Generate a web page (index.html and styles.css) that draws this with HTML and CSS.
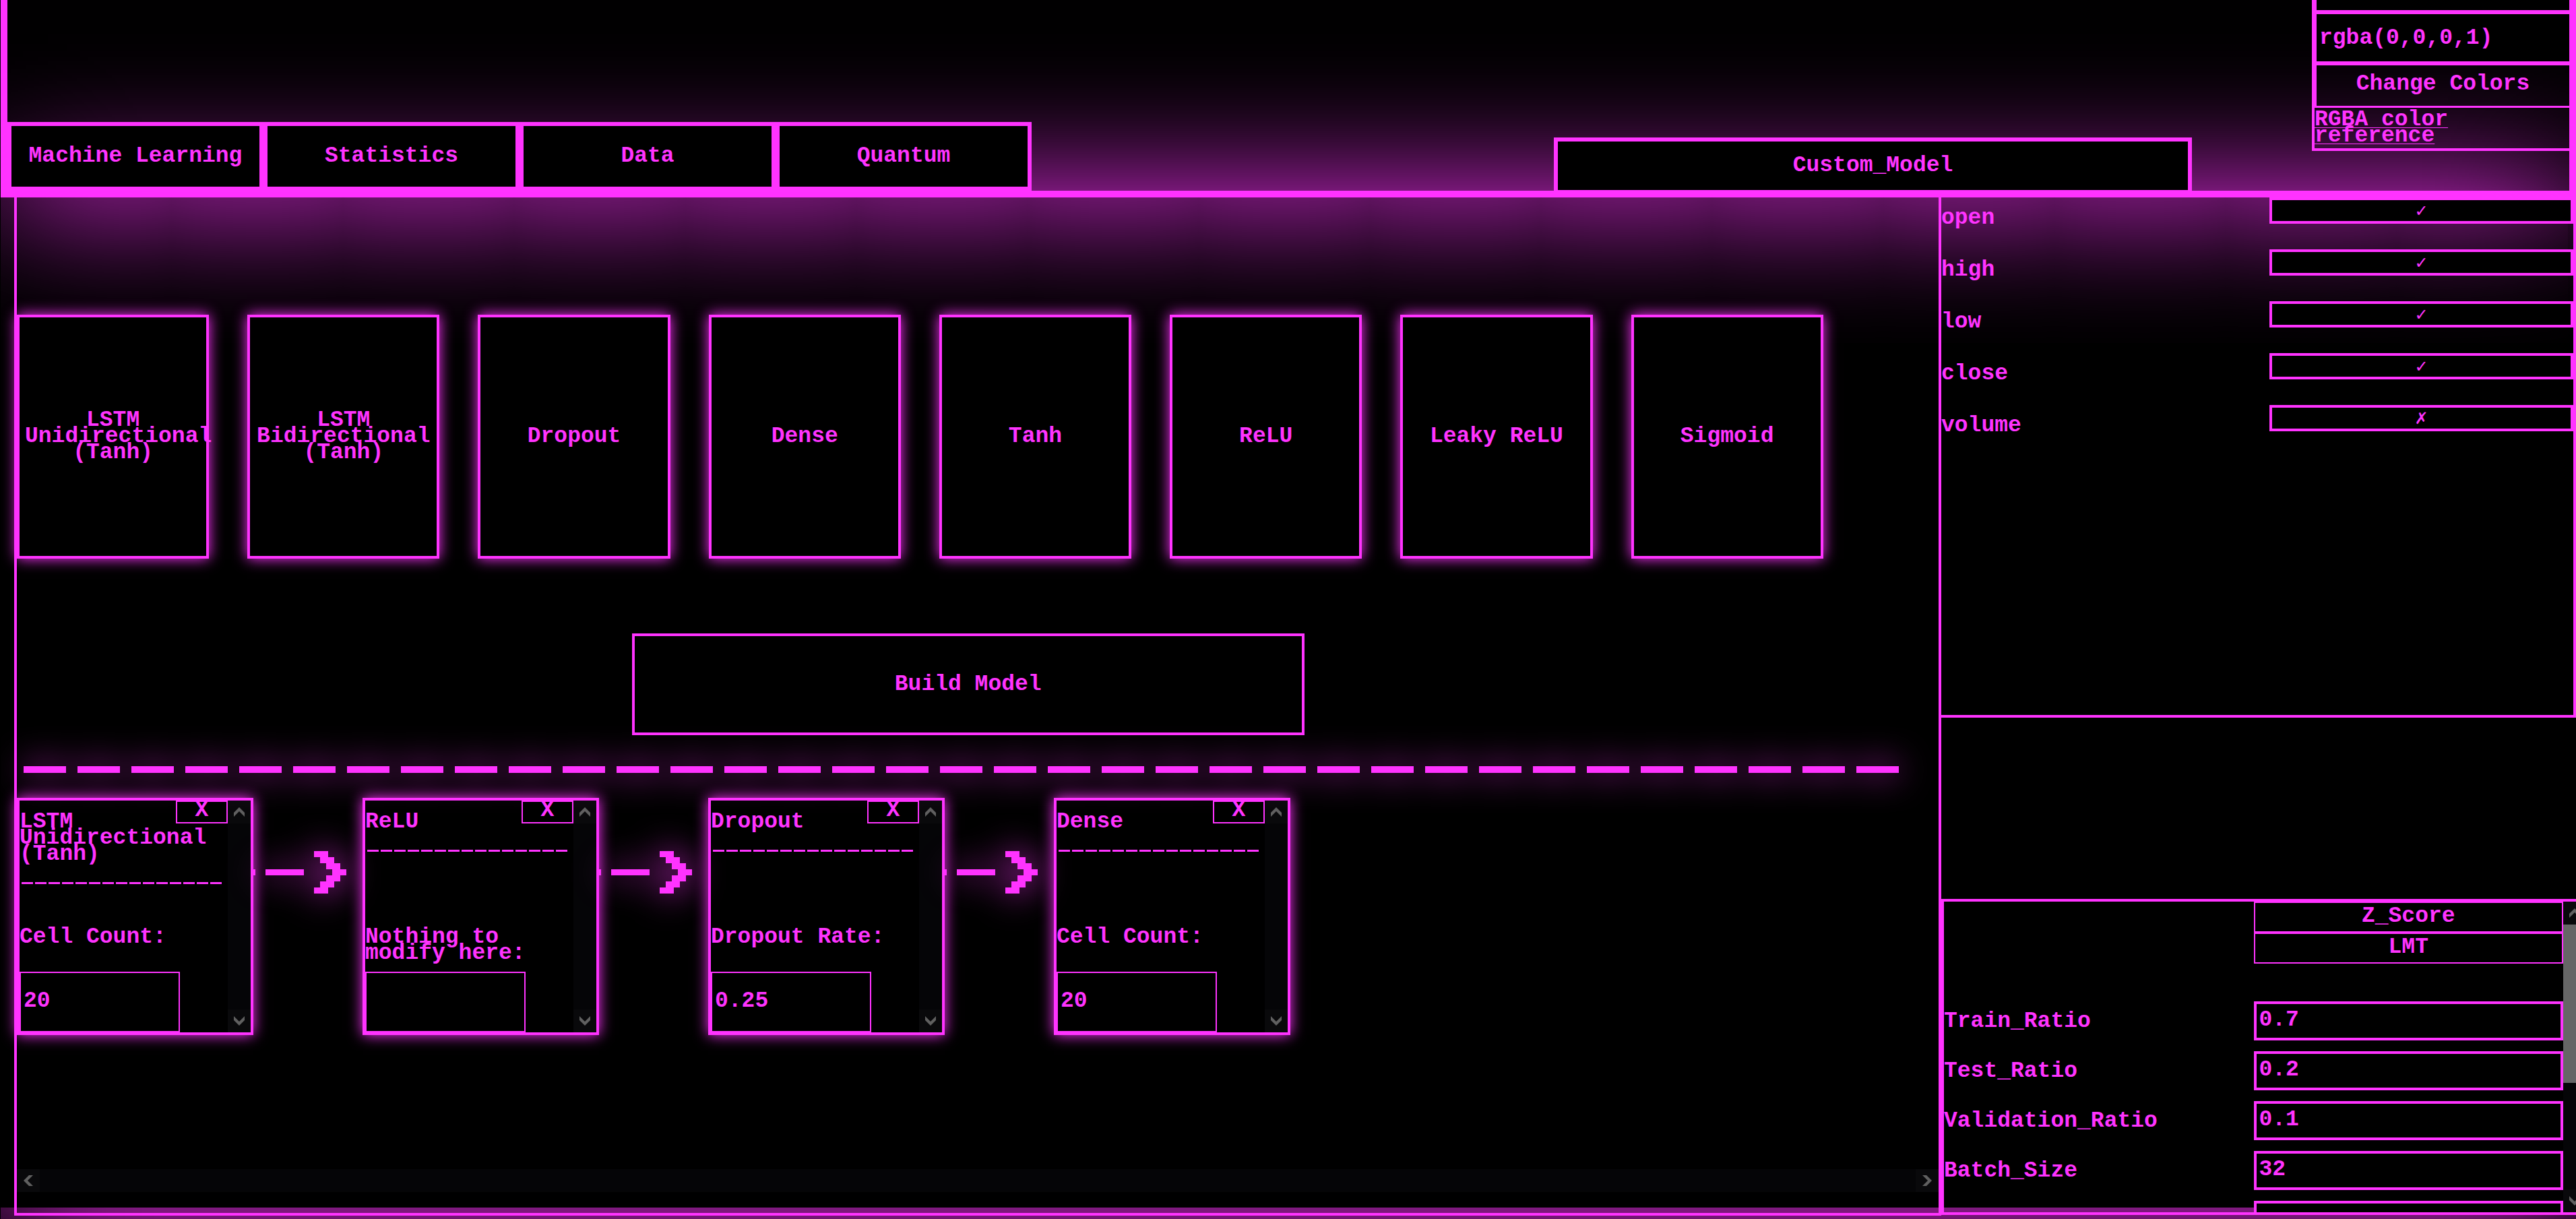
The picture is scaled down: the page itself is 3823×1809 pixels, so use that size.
FILE: index.html
```html
<!DOCTYPE html>
<html lang="en">
<head>
<meta charset="utf-8">
<title>Custom Model</title>
<link rel="stylesheet" href="styles.css">
</head>
<body>
<svg class="defs" aria-hidden="true">
  <symbol id="caret" viewBox="0 0 16 14"><path d="M0 8 8 0l8 8v6L8 6l-8 8z"/></symbol>
  <symbol id="arrow" viewBox="0 0 138 63"><path d="M0 27h3v9H0zM18 27h57v9H18zM90 0h21v9h9v9h9v9h9v9h-9v9h-9v9h-9v9H90v-9h9v-9h9v-9h9v-9h-9v-9h-9V9h-9z"/></symbol>
</svg>

<header class="top">
  <nav class="tabs">
    <button type="button">Machine Learning</button>
    <button type="button">Statistics</button>
    <button type="button">Data</button>
    <button type="button">Quantum</button>
  </nav>
  <button type="button" class="model-name">Custom_Model</button>
  <form class="colors">
    <input class="cut" type="text" aria-label="Primary color">
    <input type="text" aria-label="Background color" value="rgba(0,0,0,1)">
    <button type="button">Change Colors</button>
    <a href="#">RGBA color reference</a>
  </form>
</header>

<main class="work">
  <section class="builder">
    <div class="layers">
      <button type="button">LSTM Unidirectional (Tanh)</button>
      <button type="button">LSTM Bidirectional (Tanh)</button>
      <button type="button">Dropout</button>
      <button type="button">Dense</button>
      <button type="button">Tanh</button>
      <button type="button">ReLU</button>
      <button type="button">Leaky ReLU</button>
      <button type="button">Sigmoid</button>
    </div>
    <button type="button" class="build">Build Model</button>
    <hr class="divider">
    <div class="chain">
      <article class="node">
        <div class="node-body">
          <button type="button" class="close">X</button>
          <div class="node-head"><h4>LSTM Unidirectional (Tanh)</h4><hr></div>
          <label for="n1">Cell Count:</label>
          <input id="n1" type="text" value="20">
        </div>
        <div class="vbar"><span><svg><use href="#caret"/></svg></span><span class="down"><svg><use href="#caret"/></svg></span></div>
      </article>
      <svg class="arrow"><use href="#arrow"/></svg>
      <article class="node">
        <div class="node-body">
          <button type="button" class="close">X</button>
          <div class="node-head"><h4>ReLU</h4><hr></div>
          <label for="n2">Nothing to modify here:</label>
          <input id="n2" type="text">
        </div>
        <div class="vbar"><span><svg><use href="#caret"/></svg></span><span class="down"><svg><use href="#caret"/></svg></span></div>
      </article>
      <svg class="arrow"><use href="#arrow"/></svg>
      <article class="node">
        <div class="node-body">
          <button type="button" class="close">X</button>
          <div class="node-head"><h4>Dropout</h4><hr></div>
          <label for="n3">Dropout Rate:</label>
          <input id="n3" type="text" value="0.25">
        </div>
        <div class="vbar"><span><svg><use href="#caret"/></svg></span><span class="down"><svg><use href="#caret"/></svg></span></div>
      </article>
      <svg class="arrow"><use href="#arrow"/></svg>
      <article class="node">
        <div class="node-body">
          <button type="button" class="close">X</button>
          <div class="node-head"><h4>Dense</h4><hr></div>
          <label for="n4">Cell Count:</label>
          <input id="n4" type="text" value="20">
        </div>
        <div class="vbar"><span><svg><use href="#caret"/></svg></span><span class="down"><svg><use href="#caret"/></svg></span></div>
      </article>
    </div>
    <div class="hbar"><span class="left"><svg><use href="#caret"/></svg></span><span class="right"><svg><use href="#caret"/></svg></span></div>
  </section>

  <aside class="side">
    <div class="features">
      <div class="feature"><label for="f1">open</label><button type="button" id="f1">✓</button></div>
      <div class="feature"><label for="f2">high</label><button type="button" id="f2">✓</button></div>
      <div class="feature"><label for="f3">low</label><button type="button" id="f3">✓</button></div>
      <div class="feature"><label for="f4">close</label><button type="button" id="f4">✓</button></div>
      <div class="feature"><label for="f5">volume</label><button type="button" id="f5">✗</button></div>
    </div>
    <div class="params">
      <div class="params-body">
        <div class="choices">
          <button type="button">Z_Score</button>
          <button type="button">LMT</button>
        </div>
        <div class="param"><label for="p1">Train_Ratio</label><input id="p1" type="text" value="0.7"></div>
        <div class="param"><label for="p2">Test_Ratio</label><input id="p2" type="text" value="0.2"></div>
        <div class="param"><label for="p3">Validation_Ratio</label><input id="p3" type="text" value="0.1"></div>
        <div class="param"><label for="p4">Batch_Size</label><input id="p4" type="text" value="32"></div>
        <div class="param"><input type="text" aria-label="Epochs"></div>
      </div>
      <div class="vbar"><span><svg><use href="#caret"/></svg></span><i class="thumb"></i><span class="down"><svg><use href="#caret"/></svg></span></div>
    </div>
  </aside>
</main>
</body>
</html>
```

FILE: styles.css
```css
:root {
  --neon: #ff33ff;
  --glow: 0 0 20px var(--neon);
}

* { box-sizing: border-box; }

html { background: #000; overflow: hidden; }

body {
  margin: 0 0 0 1px;
  padding-bottom: 17px;
  background: #000;
  color: var(--neon);
  font: bold 33px/24px "Liberation Mono", monospace;
}

button, input {
  margin: 0;
  padding: 0;
  border: 4px solid var(--neon);
  border-radius: 0;
  background: #000;
  color: inherit;
  font: inherit;
  min-width: 0;
}

h4 { margin: 0; font: inherit; }

.defs { display: none; }

/* header */
.top {
  display: grid;
  grid-template-columns: 1520fr 775fr 947fr 178fr minmax(0, 382fr);
  align-items: end;
  border: 10px solid var(--neon);
  border-top: 0;
  box-shadow: 0 0 200px var(--neon);
}

.tabs {
  position: relative;
  z-index: 1;
  display: grid;
  grid-template-columns: repeat(4, 1fr);
}

.tabs button { height: 102px; border-width: 6px; }

.model-name {
  position: relative;
  z-index: 1;
  grid-column: 3;
  height: 84px;
  margin-bottom: -5px;
  border-width: 6px;
}

.colors {
  grid-column: 5;
  display: flex;
  flex-direction: column;
  margin-bottom: 59px;
  border: 4px solid var(--neon);
  border-width: 0 0 4px 4px;
}

.colors input { height: 76px; padding-left: 4px; border-width: 3px 0 3px 3px; }
.colors .cut { height: 18px; border-top: 0; }
.colors button { height: 66px; padding-bottom: 4px; border-width: 3px 0 3px 3px; background: none; }
.colors a { padding: 6px 0; color: inherit; text-decoration-thickness: 1px; text-underline-offset: 3px; }

/* workspace */
.work {
  display: grid;
  grid-template-columns: 2860fr 942fr;
  padding-left: 20px;
  box-shadow: 0 0 200px var(--neon);
}

.builder {
  display: flex;
  flex-direction: column;
  margin-bottom: -12px;
  padding: 174px 0 31px;
  border: 4px solid var(--neon);
  border-top: 0;
  min-width: 0;
}

.layers {
  display: grid;
  grid-template-columns: repeat(8, 10%);
  column-gap: 2%;
}

.layers button { height: 362px; padding: 0 8px; box-shadow: var(--glow); }

.build { width: 35%; height: 151px; margin: 111px 0 46px 32%; }

.divider {
  align-self: flex-start;
  width: 98%;
  height: 10px;
  margin: 0 0 37px 10px;
  border: 0;
  background: repeating-linear-gradient(90deg, var(--neon) 0 63px, transparent 63px 80px);
  filter: drop-shadow(0 0 25px var(--neon));
}

.chain { display: flex; align-items: flex-start; margin-bottom: 199px; }

.node {
  flex: none;
  display: flex;
  width: 351px;
  height: 352px;
  border: 4px solid var(--neon);
  background: #000;
  box-shadow: var(--glow);
}

.node-body {
  position: relative;
  flex: 1;
  display: flex;
  flex-direction: column;
  align-items: flex-start;
  min-width: 0;
}

.node-head { align-self: stretch; height: 191px; padding-top: 20px; }

.node-head hr {
  width: 297px;
  height: 3px;
  margin: 29px 0 0 3px;
  border: 0;
  background: repeating-linear-gradient(90deg, var(--neon) 0 17px, transparent 17px 20px);
}

.node-body label { height: 63px; }
.node-body input { width: 238px; height: 90px; padding: 0 0 4px 4px; border-width: 2px; }

.close {
  position: absolute;
  top: 0;
  right: 0;
  width: 77px;
  height: 34px;
  padding-bottom: 4px;
  border-width: 2px;
}

.arrow {
  flex: none;
  width: 138px;
  height: 63px;
  margin: 79px 24px 0 0;
  fill: var(--neon);
  overflow: visible;
  filter: drop-shadow(0 0 25px var(--neon));
}

/* scroll bars */
.vbar, .hbar { flex: none; display: flex; background: #050507; }
.vbar { flex-direction: column; width: 34px; }
.hbar { height: 34px; }

.vbar span, .hbar span {
  display: flex;
  align-items: center;
  justify-content: center;
  width: 34px;
  height: 34px;
  background: #09090b;
}

.vbar svg, .hbar svg { width: 16px; height: 14px; fill: #606060; }
.vbar .down { margin-top: auto; }
.down svg { transform: rotate(180deg); }
.left svg { transform: rotate(-90deg); }
.right svg { transform: rotate(90deg); }
.hbar .right { margin-left: auto; }
.thumb { height: 235px; background: #666; }

/* right column */
.side {
  display: flex;
  flex-direction: column;
  justify-content: space-between;
  margin-bottom: -11px;
  min-width: 0;
}

.features {
  margin-left: -4px;
  padding-bottom: 383px;
  border: 4px solid var(--neon);
  border-top: 0;
}

.feature {
  display: grid;
  grid-template-columns: 487fr 451fr;
  align-items: start;
  height: 77px;
}

.feature label { padding-top: 19px; }
.feature button { height: 39px; font: 24px/24px "DejaVu Sans", sans-serif; }

.params {
  display: flex;
  height: 469px;
  margin-right: -15px;
  border: 4px solid var(--neon);
  border-right: 0;
  overflow: hidden;
}

.params-body { flex: 1; min-width: 0; }

.choices { display: grid; width: 50%; margin: 0 0 56px auto; }
.choices button { height: 46px; padding-bottom: 2px; border-width: 2px; }

.param {
  display: grid;
  grid-template-columns: 1fr 1fr;
  align-items: center;
  height: 58px;
  margin-bottom: 16px;
}

.param label { padding-top: 2px; }
.param input { grid-column: 2; height: 58px; padding: 0 0 4px 4px; }
```
